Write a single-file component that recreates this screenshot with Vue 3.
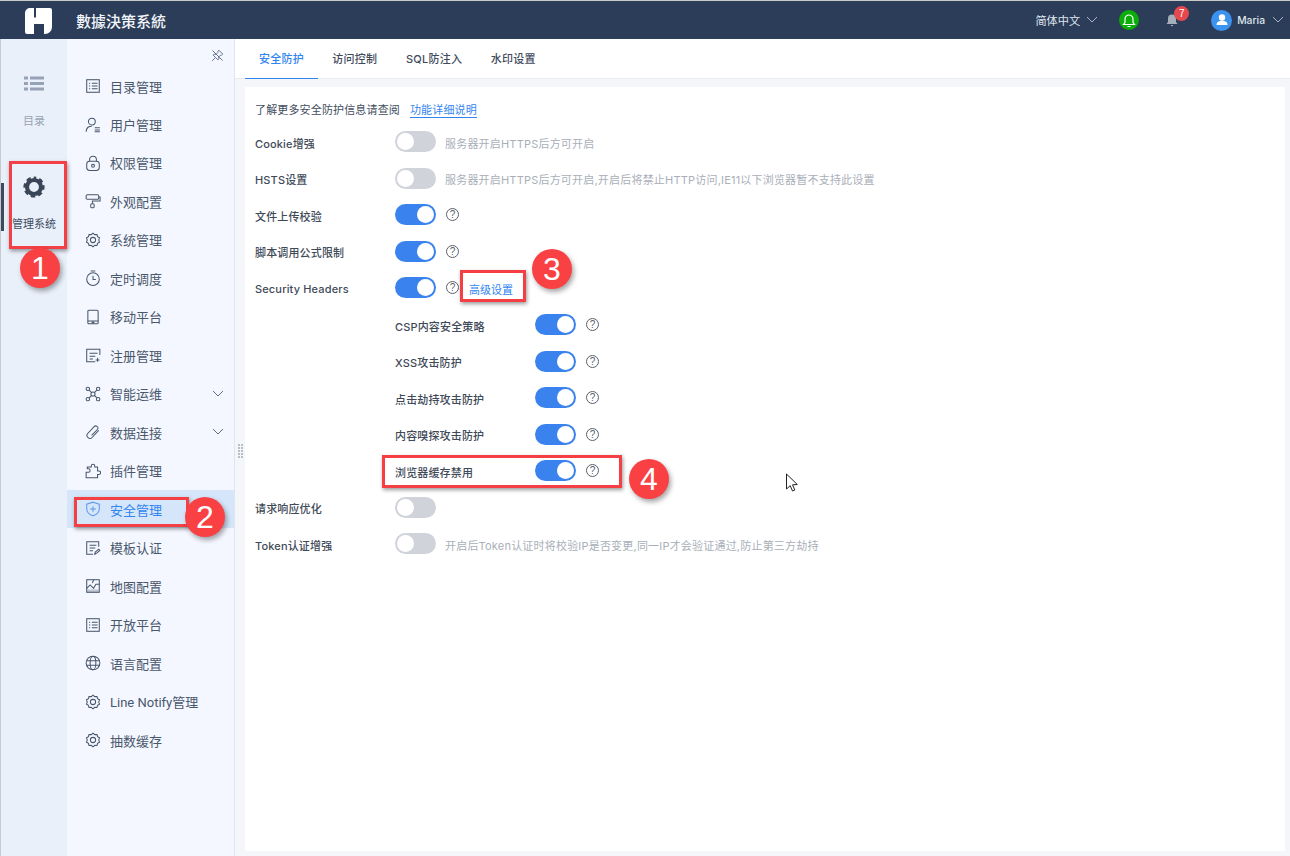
<script setup>
const menu = [
  { t: '目录管理', i: 'list' }, { t: '用户管理', i: 'user' }, { t: '权限管理', i: 'lock' },
  { t: '外观配置', i: 'roller' }, { t: '系统管理', i: 'gear' }, { t: '定时调度', i: 'clock' },
  { t: '移动平台', i: 'phone' }, { t: '注册管理', i: 'reg' }, { t: '智能运维', i: 'net', arrow: true },
  { t: '数据连接', i: 'clip', arrow: true }, { t: '插件管理', i: 'puzzle' }, { t: '安全管理', i: 'shield', active: true },
  { t: '模板认证', i: 'tpl' }, { t: '地图配置', i: 'map' }, { t: '开放平台', i: 'list' },
  { t: '语言配置', i: 'globe' }, { t: 'Line Notify管理', i: 'gear' }, { t: '抽数缓存', i: 'gear' }
]
const rows = [
  { label: 'Cookie增强', on: false, hint: '服务器开启HTTPS后方可开启' },
  { label: 'HSTS设置', on: false, hint: '服务器开启HTTPS后方可开启,开启后将禁止HTTP访问,IE11以下浏览器暂不支持此设置' },
  { label: '文件上传校验', on: true, help: true },
  { label: '脚本调用公式限制', on: true, help: true },
  { label: 'Security Headers', on: true, help: true, link: '高级设置' },
  { label: 'CSP内容安全策略', on: true, help: true, sub: true },
  { label: 'XSS攻击防护', on: true, help: true, sub: true },
  { label: '点击劫持攻击防护', on: true, help: true, sub: true },
  { label: '内容嗅探攻击防护', on: true, help: true, sub: true },
  { label: '浏览器缓存禁用', on: true, help: true, sub: true },
  { label: '请求响应优化', on: false },
  { label: 'Token认证增强', on: false, hint: '开启后Token认证时将校验IP是否变更,同一IP才会验证通过,防止第三方劫持' }
]
const marks = [
  { n: 1, c: 'm1' }, { n: 2, c: 'm2' }, { n: 3, c: 'm3' }, { n: 4, c: 'm4' }
]
const boxes = ['b1', 'b2', 'b3', 'b4']
</script>

<template>
  <div class="page">
    <header class="top">
      <svg class="logo" viewBox="0 0 27 26" width="27" height="26">
        <path fill="#fff" d="M5 0H9V9.500H11V0H25a2 2 0 0 1 2 2V19a7 7 0 0 1-7 7H19V16H9V26H2a2 2 0 0 1-2-2V5a5 5 0 0 1 5-5z" />
      </svg>
      <div class="brand">數據決策系統</div>
      <div class="spacer"></div>
      <div class="lang">简体中文</div>
      <svg class="chev" viewBox="0 0 12 8" width="12" height="8"><path d="M1 1l5 5 5-5" fill="none" stroke="#a9b4c6" stroke-width="1" /></svg>
      <div class="green">
        <svg viewBox="0 0 16 16" width="16" height="16"><path d="M2.5 12.500h11l-1.500-2V7a4 4 0 0 0-8 0v3.500zM6.500 14.500h3" fill="none" stroke="#fff" stroke-width="1.200" /></svg>
      </div>
      <div class="bell">
        <svg viewBox="0 0 14 14" width="14" height="14"><path d="M7 1.500a4 4 0 0 1 4 4V9l1.500 2h-11L3 9V5.500a4 4 0 0 1 4-4zM5.500 12h3L7 13.500z" fill="#a4adba" /></svg>
        <span class="badge">7</span>
      </div>
      <div class="avatar">
        <svg viewBox="0 0 20 20" width="20" height="20"><circle cx="10" cy="7.500" r="3.200" fill="#fff" /><path d="M4.500 15c0-3 2.500-4.300 5.500-4.300s5.500 1.300 5.500 4.300z" fill="#fff" /></svg>
      </div>
      <div class="uname">Maria</div>
      <svg class="chev last" viewBox="0 0 12 8" width="12" height="8"><path d="M1 1l5 5 5-5" fill="none" stroke="#a9b4c6" stroke-width="1" /></svg>
    </header>

    <div class="body">
      <aside class="rail">
        <div class="rail-item first">
          <svg class="blk" viewBox="0 0 20 16" width="20" height="17"><g fill="#97a2b4"><rect x="0" y="1" width="4" height="3" /><rect x="6" y="1" width="14" height="3" /><rect x="0" y="6.500" width="4" height="3" /><rect x="6" y="6.500" width="14" height="3" /><rect x="0" y="12" width="4" height="3" /><rect x="6" y="12" width="14" height="3" /></g></svg>
          <span class="rail-t muted">目录</span>
        </div>
        <div class="rail-item second">
          <i class="rail-mark"></i>
          <svg class="blk" viewBox="0 0 24 24" width="24" height="24" fill="none" stroke="#3a4658">
            <circle cx="12" cy="12" r="7" stroke-width="4.200" />
            <circle cx="12" cy="12" r="9.300" stroke-width="2.600" stroke-dasharray="4.400 3.100" stroke-dashoffset="2.200" transform="rotate(-90 12 12)" />
          </svg>
          <span class="rail-t">管理系统</span>
        </div>
      </aside>

      <nav class="menu">
        <div class="pin">
          <svg class="blk" viewBox="0 0 14 14" width="13" height="13" fill="none" stroke="#5b6b84" stroke-width="1">
            <path d="M8.500 1.300l4.200 4.200-1.300 1.100-1-.1-2 2 .1 2.200-1 1L2.300 6.600l1-1 2.200.1 2-2-.1-1zM4.300 9.700L1.200 12.800M1.500 1.500l11 11" />
          </svg>
        </div>
        <div v-for="m in menu" :key="m.t + m.i" class="mi" :class="{ active: m.active }">
          <svg class="mi-ic" viewBox="0 0 14 14" width="16" height="16" fill="none" stroke="currentColor" stroke-width=".9">
            <template v-if="m.i === 'list'"><rect x="1.500" y="1.500" width="11" height="11" /><path d="M3.500 4.500h1M6 4.500h5M3.500 7h1M6 7h5M3.500 9.500h1M6 9.500h5" /></template>
            <template v-else-if="m.i === 'user'"><circle cx="6" cy="4" r="3" /><path d="M1 13c0-3.500 2-5 5-5M8.500 9.500h4.500M8.500 11.300h4.500M8.500 13h4.500" /></template>
            <template v-else-if="m.i === 'lock'"><rect x="1.500" y="5.500" width="11" height="8" rx="2.500" /><path d="M4 5.500V4a3 3 0 0 1 6 0v1.500" /><circle cx="7" cy="9.500" r="1.300" /></template>
            <template v-else-if="m.i === 'roller'"><rect x="1" y="1.500" width="11" height="4" rx="1" /><path d="M12 3.500h1.200v3.500H6.500v2.500" /><rect x="5" y="9.500" width="3" height="3.500" rx="1" /></template>
            <template v-else-if="m.i === 'gear'"><path d="M7 1l1.500 1.300 2-.1.500 1.900 1.700 1-.7 1.900.7 1.900-1.700 1-.5 1.900-2-.1L7 13l-1.500-1.300-2 .1-.5-1.900-1.700-1L2 7 1.300 5.100l1.700-1 .5-1.900 2 .1z" /><circle cx="7" cy="7" r="2.300" /></template>
            <template v-else-if="m.i === 'clock'"><circle cx="7" cy="8" r="5.500" /><path d="M7 5v3.300h2.500M5 .8h4" /></template>
            <template v-else-if="m.i === 'phone'"><rect x="2.500" y="1" width="9" height="12" rx="1" /><path d="M2.500 10.500h9" /><rect x="5.800" y="11" width="2.400" height="1.500" fill="currentColor" stroke="none" /></template>
            <template v-else-if="m.i === 'reg'"><path d="M13 7V2H1.500v11H9M4 5.500h7M4 8h5M4 10.500h3M11 9.500v3.500M9.300 11.300h3.500" /></template>
            <template v-else-if="m.i === 'net'"><circle cx="2.500" cy="2.500" r="1.500" /><circle cx="11.500" cy="2.500" r="1.500" /><circle cx="2.500" cy="11.500" r="1.500" /><circle cx="11.500" cy="11.500" r="1.500" /><circle cx="7" cy="7" r="1.800" /><path d="M3.600 3.600l2 2M10.400 3.600l-2 2M3.600 10.400l2-2M10.400 10.400l-2-2" /></template>
            <template v-else-if="m.i === 'clip'"><path d="M12 5.500l-5.800 6.300a2.600 2.600 0 0 1-4-3.300l5.800-6.200a1.900 1.900 0 0 1 3 2.300L5.800 10" /></template>
            <template v-else-if="m.i === 'puzzle'"><path d="M1 8h2a1.500 1.500 0 0 0 0-3H2V3.500h3.500V2.500a1.500 1.500 0 0 1 3 0v1H11v3.500h1.200a1.500 1.500 0 0 1 0 3H11V13H1z" /></template>
            <template v-else-if="m.i === 'shield'"><path d="M7 1l5.500 1.800V7c0 3-2.500 5-5.500 6-3-1-5.500-3-5.500-6V2.800zM7 4.500v5M4.500 7h5" /></template>
            <template v-else-if="m.i === 'tpl'"><path d="M12 6V1.500H1.500v11H7M4 4.500h6M4 7h5M4 9.500h3M8.500 12.500l.5-2 3-2.500 1 1.200-3 2.500z" /></template>
            <template v-else-if="m.i === 'map'"><rect x="1.500" y="1.500" width="11" height="11" /><path d="M1.500 9l3-3 3 3 2-3.500 3 0M7.500 1.500l-1 3" /><rect x="2" y="10" width="10" height="2.500" fill="currentColor" opacity=".3" stroke="none" /></template>
            <template v-else-if="m.i === 'globe'"><circle cx="7" cy="7" r="6" /><ellipse cx="7" cy="7" rx="2.500" ry="6" /><path d="M1 5h12M1 9h12" /></template>
          </svg>
          <span class="mi-t">{{ m.t }}</span>
          <svg v-if="m.arrow" class="mi-arrow" viewBox="0 0 12 8" width="12" height="8"><path d="M1 1l5 5 5-5" fill="none" stroke="#5f6d82" stroke-width="1" /></svg>
        </div>
      </nav>

      <main class="main">
        <div class="tabs">
          <div class="tab active">安全防护</div>
          <div class="tab">访问控制</div>
          <div class="tab">SQL防注入</div>
          <div class="tab">水印设置</div>
        </div>
        <div class="card">
          <div class="intro">了解更多安全防护信息请查阅<a class="doc">功能详细说明</a></div>
          <div v-for="r in rows" :key="r.label" class="row" :class="{ sub: r.sub }">
            <span class="label">{{ r.label }}</span>
            <span class="switch" :class="{ on: r.on }"><i></i></span>
            <span v-if="r.help" class="help">?</span>
            <span v-if="r.hint" class="hint">{{ r.hint }}</span>
            <a v-if="r.link" class="adv">{{ r.link }}</a>
          </div>
        </div>
      </main>
    </div>

    <div class="grip"><i v-for="n in 10" :key="n"></i></div>

    <div v-for="b in boxes" :key="b" class="rbox" :class="b"></div>
    <div v-for="m in marks" :key="m.n" class="mark" :class="m.c">{{ m.n }}</div>

    <svg class="cursor" viewBox="0 0 14 20" width="14" height="20"><path d="M1.500 1v15l3.700-3.300 2.300 5.300 2.300-1-2.300-5.200 4.800-.3z" fill="#fff" stroke="#222" stroke-width="1" /></svg>
  </div>
</template>

<style>
html, body { margin: 0; padding: 0; }
</style>

<style scoped>
.page {
  position: relative;
  width: 1290px;
  height: 856px;
  overflow: hidden;
  background: #f5f6f9;
  font-family: Inter, "Noto Sans CJK SC", sans-serif;
  color: #3d4a5c;
  display: flex;
  flex-direction: column;
}
.blk { display: block; }
.top {
  height: 39px;
  flex: none;
  box-sizing: border-box;
  background: #2c3d59;
  border-top: 1px solid #c9cbc8;
  display: flex;
  align-items: center;
  color: #fff;
}
.logo { margin-left: 25px; margin-top: 1px; }
.brand { margin-left: 24px; font-size: 15px; color: #f2f5f9; font-weight: 500; }
.spacer { flex: 1; }
.lang { font-size: 11.200px; color: #dfe5ee; }
.chev { margin-left: 6px; }
.green {
  width: 20px; height: 20px; border-radius: 50%;
  background: #0aad0a;
  margin-left: 21px;
  display: flex; align-items: center; justify-content: center;
}
.bell { position: relative; margin-left: 26px; width: 14px; height: 14px; display: flex; }
.badge {
  position: absolute; left: 9px; top: -7px;
  width: 15px; height: 15px; border-radius: 50%;
  background: #e5484d; color: #fff;
  font-size: 10px; line-height: 15px; text-align: center;
  font-family: "Liberation Sans", sans-serif;
}
.avatar {
  width: 21px; height: 21px; border-radius: 50%;
  background: #3a93ef;
  margin-left: 32px;
  display: flex; align-items: center; justify-content: center;
}
.uname { margin-left: 5px; font-size: 10.300px; color: #dfe5ee; font-weight: 500; }
.chev.last { margin-left: 7px; margin-right: 6px; }

.body { flex: 1; display: flex; min-height: 0; }
.rail {
  width: 67px; flex: none;
  background: #e9f0fa;
  border-left: 1px solid #c4c9d2;
  box-sizing: border-box;
  display: flex; flex-direction: column;
}
.rail-item {
  position: relative;
  display: flex; flex-direction: column; align-items: center;
}
.rail-item.first { padding-top: 36px; height: 136px; box-sizing: border-box; gap: 22px; }
.rail-item.second { gap: 18px; }
.rail-t { font-size: 11px; line-height: 14px; color: #3f4c5f; }
.rail-t.muted { color: #98a3b3; }
.rail-mark {
  position: absolute; left: 0; top: 8px;
  width: 3px; height: 48px; background: #3d4a5c;
}

.menu {
  width: 168px; flex: none;
  box-sizing: border-box;
  background: #f4f7ff;
  border-right: 1px solid #dfe4ee;
  padding-top: 27.800px;
  position: relative;
}
.pin { position: absolute; right: 10px; top: 10px; }
.mi {
  height: 38.470px;
  display: flex; align-items: center;
  padding-left: 18px; padding-right: 10px;
  font-size: 13px;
  font-family: Roboto, "Noto Sans CJK SC", sans-serif;
  color: #4a586c;
  box-sizing: border-box;
}
.mi-ic { color: #48566b; flex: none; }
.mi-t { margin-left: 9px; flex: 1; white-space: nowrap; }
.mi.active { background: #d5e6fb; color: #3285f0; }
.mi.active .mi-ic { color: #5f97e8; }

.main { flex: 1; display: flex; flex-direction: column; min-width: 0; }
.tabs {
  height: 39px; flex: none;
  background: #fff;
  border-bottom: 1px solid #e8ebf0;
  padding-left: 10px;
  display: flex;
}
.tab {
  padding: 0 14.300px;
  font-size: 11px; font-weight: 500;
  line-height: 40px;
  color: #3f4b5c;
  letter-spacing: .25px;
}
.tab.active { color: #3285f0; border-bottom: 1px solid #3285f0; margin-bottom: -1px; padding: 0 14px; }
.card {
  flex: none;
  margin: 8px 5px 5px 10px;
  height: 764px;
  background: #fff;
  padding: 14px 0 0 10px;
  box-sizing: border-box;
}
.intro {
  font-size: 11px; line-height: 18px; color: #414d5e;
  height: 21px; margin-bottom: 1.500px;
  letter-spacing: .15px;
}
.doc {
  margin-left: 10px; color: #3285f0;
  border-bottom: 1px solid #3285f0;
}
.row {
  height: 36.550px;
  display: flex; align-items: center;
  font-size: 11px;
}
.row.sub { padding-left: 140px; }
.label {
  width: 140px; flex: none;
  font-weight: 500;
  color: #3f4a58;
  letter-spacing: .15px;
  white-space: nowrap;
  margin-top: 2px;
}
.switch {
  width: 41px; height: 21px; flex: none;
  border-radius: 11px;
  background: #d0d3da;
  position: relative;
}
.switch i {
  position: absolute; left: 2px; top: 2px;
  width: 17px; height: 17px;
  border-radius: 50%; background: #fff;
}
.switch.on { background: #3a83ee; }
.switch.on i { left: 22px; }
.help {
  width: 11px; height: 11px;
  border: 1px solid #59606b;
  border-radius: 50%;
  margin-left: 10px;
  font-size: 10px; line-height: 11px;
  text-align: center; color: #59606b;
  font-family: "Liberation Sans", sans-serif;
}
.hint { margin-left: 9px; color: #a9afb9; font-size: 11px; white-space: nowrap; margin-top: 2px; letter-spacing: .2px; }
.adv { margin-left: 10px; color: #3285f0; margin-top: 2px; }

.grip {
  position: absolute; left: 238px; top: 444px;
  width: 5px; display: flex; flex-wrap: wrap; gap: 1px;
}
.grip i { width: 2px; height: 2px; background: #b9bfc9; }

.rbox {
  position: absolute;
  border: 3px solid #f43f44;
  box-sizing: border-box;
  box-shadow: 1px 2px 4px rgba(0, 0, 0, .4);
}
.b1 { left: 9px; top: 161px; width: 58px; height: 88px; }
.b2 { left: 74px; top: 497px; width: 115px; height: 30px; }
.b3 { left: 460px; top: 270px; width: 66px; height: 32px; }
.b4 { left: 382px; top: 455px; width: 240px; height: 33px; }

.mark {
  position: absolute;
  width: 40px; height: 40px;
  border-radius: 50%;
  background: #f94144;
  color: #fff;
  font-family: "Liberation Sans", sans-serif;
  font-size: 32px; line-height: 40px;
  text-align: center;
  box-shadow: 2px 3px 5px rgba(0, 0, 0, .35);
}
.m1 { left: 20px; top: 248px; }
.m2 { left: 185px; top: 497px; }
.m3 { left: 532px; top: 249px; }
.m4 { left: 629px; top: 459px; }
.cursor { position: absolute; left: 785px; top: 473px; }
</style>
